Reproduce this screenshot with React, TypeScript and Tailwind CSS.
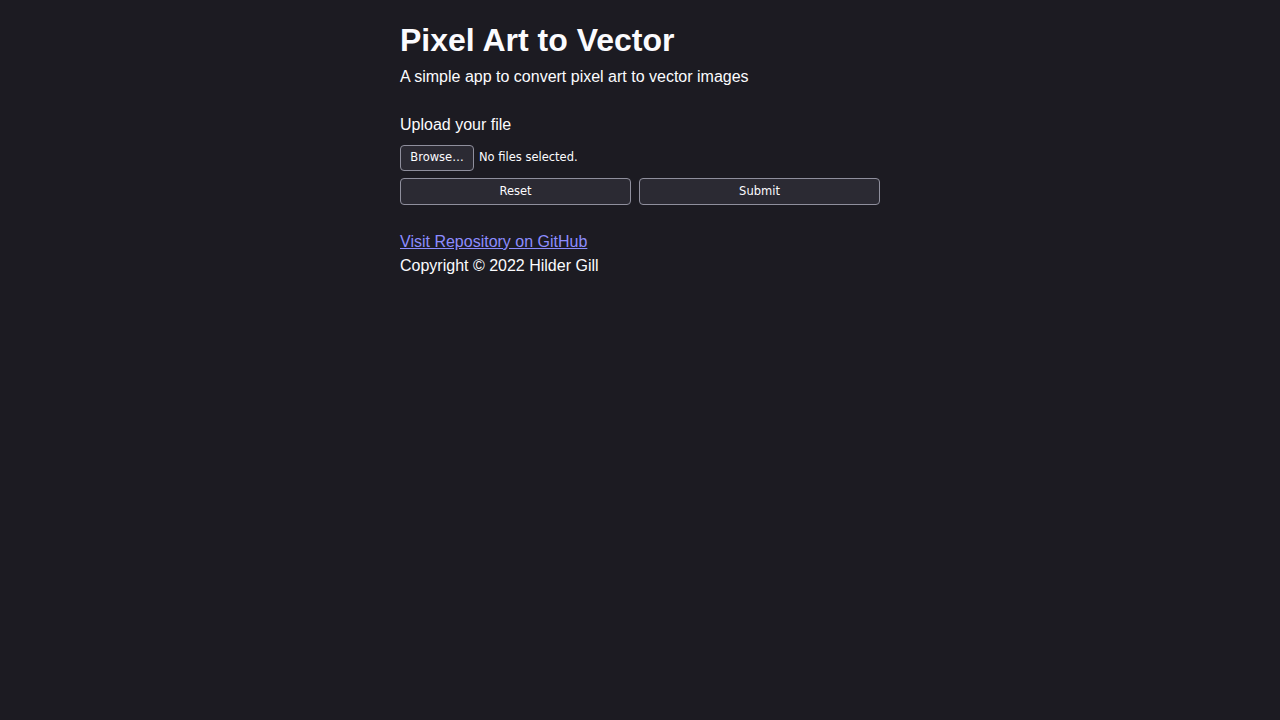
export default function App() {
  return (
    <div className="min-h-screen w-full bg-[#1c1b22] text-[#fbfbfe] font-['Liberation_Sans',Arial,sans-serif]">
      <div className="mx-auto w-[480px] pt-[22px]">
        <h1 className="text-[32px] leading-[37px] font-bold">Pixel Art to Vector</h1>
        <p className="mt-[9px] text-[16px] leading-[18px]">A simple app to convert pixel art to vector images</p>

        <form className="mt-[30px]" onSubmit={(e) => e.preventDefault()}>
          <label className="block text-[16px] leading-[18px]">Upload your file</label>
          <div className="mt-[11px] flex items-center gap-[5px] font-['DejaVu_Sans',sans-serif] text-[11.5px]">
            <button
              type="button"
              className="h-[26px] w-[74px] rounded-[4px] border border-[#8f8f9d] bg-[#2b2a33] text-[#fbfbfe]"
            >
              Browse…
            </button>
            <span>No files selected.</span>
          </div>
          <div className="mt-[7px] flex gap-[8px] font-['DejaVu_Sans',sans-serif] text-[11.5px]">
            <button
              type="reset"
              className="h-[27px] w-[231px] rounded-[4px] border border-[#8f8f9d] bg-[#2b2a33] pt-px text-[#fbfbfe]"
            >
              Reset
            </button>
            <button
              type="submit"
              className="h-[27px] w-[241px] rounded-[4px] border border-[#8f8f9d] bg-[#2b2a33] pt-px text-[#fbfbfe]"
            >
              Submit
            </button>
          </div>
        </form>

        <footer className="mt-[25px] text-[16px] leading-[24px]">
          <a href="#" className="block w-fit text-[#8c8cff] underline">
            Visit Repository on GitHub
          </a>
          <p>Copyright © 2022 Hilder Gill</p>
        </footer>
      </div>
    </div>
  )
}
